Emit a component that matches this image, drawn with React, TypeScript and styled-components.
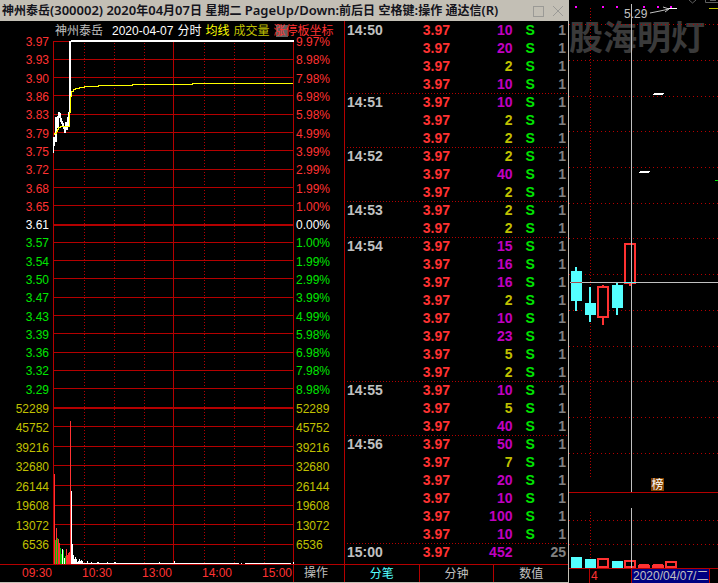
import React from "react";
import styled, { createGlobalStyle } from "styled-components";

const RED = "#b40000";
const BRIGHT = "#ff3232";
const CYAN = "#54ffff";
const GREY = "#c0c0c0";
const OLIVE = "#c0c000";
const FRAME = "#c3bfb5";

const GlobalStyle = createGlobalStyle`
  * { box-sizing: border-box; }
  body {
    margin: 0;
    background: #000;
    color: ${GREY};
    font: 12px/14px "Liberation Sans", "Noto Sans CJK SC", sans-serif;
  }
  button { font: inherit; color: inherit; background: none; border: 0; padding: 0; cursor: pointer; }
`;

const Page = styled.div`
  display: grid;
  grid-template-columns: minmax(0, 569fr) minmax(0, 149fr);
  min-height: 100vh;
`;

const Dialog = styled.section`
  display: flex;
  flex-direction: column;
  border-right: 1px solid ${FRAME};
  border-bottom: 1px solid ${FRAME};
`;

const TitleBar = styled.header`
  display: flex;
  align-items: center;
  height: 21px;
  padding-left: 2px;
  background: ${FRAME};
  color: #14141c;
`;

const Title = styled.h1`
  flex: 1;
  margin: 0;
  white-space: pre;
  font: 600 13px/18px "Noto Sans", "Noto Sans CJK SC", sans-serif;
`;

const Han = styled.span`
  font-size: 12px;
`;

const WindowButton = styled.button`
  width: 20px;
  height: 20px;
  color: #9b9a96;
  svg { display: block; margin: 0 auto; }
`;

const DialogBody = styled.div`
  flex: 1;
  display: grid;
  grid-template-columns: minmax(0, 345fr) minmax(0, 223fr);
  grid-template-rows: 1fr 18px;
`;

const IntradayPanel = styled.div`
  display: grid;
  grid-template-columns: 53px 1fr 50px;
  grid-template-rows: 19px 1fr;
  border-right: 1px solid ${RED};
`;

const Legend = styled.div`
  grid-area: 1 / 2 / 2 / 4;
  display: flex;
  gap: 4px;
  padding-left: 2px;
  line-height: 20px;
  white-space: nowrap;
`;

const LegendItem = styled.span<{ $color: string; $wide?: boolean }>`
  position: relative;
  color: ${(p) => p.$color};
  margin-right: ${(p) => (p.$wide ? "5px" : "0")};
`;

const LegendMark = styled.i`
  position: absolute;
  z-index: -1;
  left: 3px;
  top: 4px;
  width: 12px;
  height: 12px;
  background: #606060;
`;

const Plot = styled.svg`
  display: block;
  width: 100%;
  height: 100%;
  min-height: 0;
`;

const PlotCell = styled.div`
  grid-area: 2 / 2 / 3 / 3;
  min-height: 0;
`;

const Axis = styled.div<{ $side: "left" | "right" }>`
  grid-area: ${(p) => (p.$side === "left" ? "1 / 1 / 3 / 2" : "1 / 3 / 3 / 4")};
  display: flex;
  flex-direction: column;
  padding: 12px 4px 9px 2px;
  text-align: ${(p) => (p.$side === "left" ? "right" : "left")};
`;

const AxisGroup = styled.div<{ $share: number }>`
  flex: ${(p) => p.$share} 1 0;
  display: flex;
  flex-direction: column;
`;

const AxisLabel = styled.span<{ $color: string }>`
  flex: 1 1 0;
  display: flex;
  flex-direction: column;
  justify-content: center;
  color: ${(p) => p.$color};
`;

const TimeBar = styled.div`
  display: grid;
  grid-template-columns: 53px repeat(4, 1fr) 51px;
  border-top: 1px solid ${RED};
  border-right: 1px solid ${RED};
  color: ${BRIGHT};
  line-height: 17px;
  text-align: right;
`;

const TimeLabel = styled.span`
  padding-right: 1px;
`;

const ActionButton = styled.button`
  border-left: 1px solid ${RED};
  color: ${GREY};
  text-align: center;
  padding-right: 6px;
`;

const Ticks = styled.table`
  width: 100%;
  align-self: start;
  table-layout: fixed;
  border-collapse: collapse;
  font-size: 14px;
  font-weight: 700;
  line-height: 18px;
`;

const TickRow = styled.tr<{ $divided: boolean }>`
  height: 18px;
  background: ${(p) =>
    p.$divided
      ? `repeating-linear-gradient(90deg, transparent 0 2px, ${RED} 2px 3px) 0 0 / 100% 1px no-repeat`
      : "none"};
`;

const Cell = styled.td<{ $color: string; $align?: string; $width?: string }>`
  padding: 0 2px;
  width: ${(p) => p.$width ?? "auto"};
  color: ${(p) => p.$color};
  text-align: ${(p) => p.$align ?? "right"};
`;

const TabBar = styled.div`
  display: flex;
  border-top: 1px solid ${RED};
`;

const Tab = styled.button<{ $active?: boolean }>`
  flex: 1;
  color: ${(p) => (p.$active ? CYAN : GREY)};
  & + & { border-left: 1px solid ${RED}; }
`;

const DailyPanel = styled.section`
  display: flex;
  flex-direction: column;
  overflow: hidden;
`;

const Pane = styled.div<{ $share: number }>`
  position: relative;
  flex: ${(p) => p.$share} 1 0;
  min-height: 0;
`;

const PlotLayer = styled.div`
  position: relative;
  height: 100%;
`;

const Watermark = styled.div`
  position: absolute;
  left: 0;
  top: 16px;
  color: #3a3a3a;
  font: 700 34px/40px "Noto Sans CJK SC", sans-serif;
  white-space: nowrap;
`;

const HighLabel = styled.span`
  position: absolute;
  left: 55px;
  top: 7px;
`;

const NewsBadge = styled.span`
  position: absolute;
  left: 82px;
  bottom: 2px;
  width: 13px;
  height: 13px;
  background: #804000;
  color: #fff;
  line-height: 14px;
  text-align: center;
`;

const DateBar = styled.footer`
  display: flex;
  height: 14px;
  padding-left: 20px;
`;

const MonthCell = styled.span`
  width: 42px;
  padding-left: 1px;
  border-left: 1px solid ${RED};
  color: ${BRIGHT};
`;

const DateCell = styled.span`
  padding: 0 1px;
  border: solid ${RED};
  border-width: 0 1px;
  background: #000080;
  white-space: nowrap;
`;

const heading = "神州泰岳(300002) 2020年04月07日 星期二 PageUp/Down:前后日 空格键:操作 通达信(R)";

const prices = ["3.97", "3.93", "3.90", "3.86", "3.83", "3.79", "3.75", "3.72", "3.68", "3.65", "3.61",
  "3.57", "3.54", "3.50", "3.47", "3.43", "3.39", "3.36", "3.32", "3.29"];
const percents = ["9.97%", "8.98%", "7.98%", "6.98%", "5.98%", "4.99%", "3.99%", "2.99%", "1.99%", "1.00%", "0.00%",
  "1.00%", "1.99%", "2.99%", "3.99%", "4.99%", "5.98%", "6.98%", "7.98%", "8.98%"];
const volumes = ["52289", "45752", "39216", "32680", "26144", "19608", "13072", "6536"];

const ticks: [string, number[]][] = [
  ["14:50", [10, 20, 2, 10]],
  ["14:51", [10, 2, 2]],
  ["14:52", [2, 40, 2]],
  ["14:53", [2, 2]],
  ["14:54", [15, 16, 16, 2, 10, 23, 5, 2]],
  ["14:55", [10, 5, 40]],
  ["14:56", [50, 7, 20, 10, 100, 10]],
  ["15:00", [452]],
];

/* Intraday price: [x, top, bottom] for each column of the trace */
const trace = [
  [53, 137, 153], [54, 137, 146], [55, 117, 142], [56, 117, 142], [57, 116, 128], [58, 112, 127],
  [59, 112, 118], [60, 113, 122], [61, 118, 124], [62, 121, 127], [63, 123, 129], [64, 127, 133],
  [65, 122, 133], [66, 122, 130], [67, 117, 130], [68, 112, 126], [69, 41, 113], [70, 41, 113],
];
const bars: [number, number, string][] = [
  [54, 474, BRIGHT], [55, 540, "#00c000"], [56, 528, BRIGHT], [57, 538, "#00c000"], [58, 539, BRIGHT],
  [59, 543, BRIGHT], [60, 548, "#00c000"], [61, 554, "#00c000"], [62, 549, "#fff"], [63, 550, "#00c000"],
  [64, 558, "#fff"], [65, 556, "#00c000"], [66, 549, BRIGHT], [67, 555, BRIGHT], [68, 553, BRIGHT],
  [69, 552, BRIGHT], [70, 421, BRIGHT], [71, 491, "#fff"], [72, 544, "#fff"], [73, 555, "#fff"],
  [74, 559, "#fff"], [75, 557, "#fff"], [76, 559, "#fff"], [77, 562, "#fff"], [78, 561, "#fff"],
  [79, 559, "#fff"], [80, 561, "#fff"], [81, 560, "#fff"], [82, 561, "#fff"], [87, 561, "#fff"],
  [91, 562, "#fff"], [97, 562, "#fff"], [98, 562, "#fff"], [107, 562, "#fff"], [114, 562, "#fff"],
  [115, 562, "#fff"], [159, 562, "#fff"], [174, 561, "#fff"], [293, 562, "#fff"],
];

const toneOf = (i: number) => (i < 10 ? BRIGHT : i === 10 ? "#fff" : "#00e600");

function AxisColumn({ side, labels }: { side: "left" | "right"; labels: string[] }) {
  return (
    <Axis $side={side}>
      <AxisGroup $share={366}>
        {labels.map((t, i) => <AxisLabel key={i} $color={toneOf(i)}>{t}</AxisLabel>)}
      </AxisGroup>
      <AxisGroup $share={156}>
        {volumes.map((t) => <AxisLabel key={t} $color={OLIVE}>{t}</AxisLabel>)}
      </AxisGroup>
    </Axis>
  );
}

function IntradayPlot() {
  const rows = [
    ...Array.from({ length: 20 }, (_, k) => Math.floor(41 + 18.3 * k)),
    ...Array.from({ length: 8 }, (_, k) => Math.floor(407 + 19.6 * k)),
  ];
  return (
    <Plot viewBox="53 40 241 524" preserveAspectRatio="none" shapeRendering="crispEdges" aria-label="分时走势">
      {rows.map((y) => (
        <rect key={y} x="53" y={y} width="241" height={y === 224 || y === 407 ? 2 : 1} fill={RED} />
      ))}
      {[84, 114, 144, 204, 234, 264].map((x) => (
        <line key={x} x1={x + 0.5} x2={x + 0.5} y1="43" y2="564" stroke={RED} strokeDasharray="1 2" />
      ))}
      {[53, 173, 293].map((x) => <rect key={x} x={x} y="41" width="1" height="523" fill={RED} />)}
      {bars.map(([x, y, c]) => <rect key={x} x={x} y={y} width="1" height={564 - y} fill={c} />)}
      <path d="M71 563.5H239M241 563.5H242M245 563.5H291" stroke="#fff" />
      {trace.map(([x, a, b]) => <rect key={x} x={x} y={a} width="1" height={b - a} fill="#fff" />)}
      <rect x="71" y="40" width="223" height="2" fill="#fff" />
      <path
        d="M54.5 135V133.5H56V131.5H57.5V129.5H58.5V127.5H60V126.5H69.5V112.5H70.5V96.5H71.5V91.5H73V89.5H75V88.5H79V87.5H84V86.5H98V85.5H132V84.5H192V83.5H293"
        fill="none"
        stroke="#ffff00"
      />
    </Plot>
  );
}

function TickTable() {
  return (
    <Ticks>
      <tbody>
        {ticks.flatMap(([time, sizes], g) =>
          sizes.map((n, i) => (
            <TickRow key={`${time}-${i}`} $divided={g > 0 && i === 0}>
              <Cell $color={GREY} $align="left" $width="27%">{i === 0 ? time : ""}</Cell>
              <Cell $color={BRIGHT} $width="21%">3.97</Cell>
              <Cell $color={n < 10 ? OLIVE : "#c000c0"} $width="28%">{n}</Cell>
              <Cell $color="#00e600" $align="center" $width="14%">{n === 452 ? "" : "S"}</Cell>
              <Cell $color="#808080">{n === 452 ? 25 : 1}</Cell>
            </TickRow>
          )),
        )}
      </tbody>
    </Ticks>
  );
}

const dotted = (y: number) => (
  <line key={y} x1="569" x2="718" y1={y + 0.5} y2={y + 0.5} stroke={RED} strokeDasharray="1 3" />
);

function CandlePlot() {
  return (
    <Plot viewBox="569 0 149 493" preserveAspectRatio="none" shapeRendering="crispEdges" aria-label="日线">
      {[24, 60, 96, 131, 167, 203, 238, 274, 310, 346, 381, 417, 453].map(dotted)}
      <line x1="590.5" x2="590.5" y1="8" y2="478" stroke={RED} strokeDasharray="1 2" />
      {[575, 602, 616, 643, 657, 670].map((x) => <rect key={x} x={x} y="6" width="2" height="2" fill="#ff00ff" />)}
      <rect x="667" y="8" width="10" height="1" fill="#fff" />
      <rect x="709" y="8" width="9" height="1" fill={OLIVE} />
      <path d="M650 13L660 11L669 9M663 7L669 9L665 12" fill="none" stroke={GREY} shapeRendering="auto" />
      <path d="M689 0L692.5 3L696 0M705.5 0V2.5H718M710 0.5H716" fill="none" stroke="#606060" shapeRendering="auto" />
      <path d="M654 93h10v1h-1v1h-10v-1h1zM640 171h10v1h-1v1h-10v-1h1z" fill="#fff" />
      <rect x="715" y="180" width="3" height="1" fill="#00e600" />
      <path
        d="M571 271h11v30h-11zM575 267h2v44h-2zM585 303h11v12h-11zM589 287h2v35h-2zM612 285h11v23h-11zM616 283h2v32h-2z"
        fill={CYAN}
      />
      <path d="M598 287h10v30h-10zM625 244h10v39h-10z" fill="#000" stroke={BRIGHT} strokeWidth="2" />
      <path d="M602 285h2v2h-2zM602 317h2v8h-2zM629 283h2v3h-2z" fill={BRIGHT} />
      <rect x="570" y="282" width="148" height="1" fill={GREY} />
      <rect x="571" y="282" width="11" height="1" fill="#a84c4c" />
      <rect x="624" y="282" width="12" height="1" fill={CYAN} />
      <rect x="631" y="4" width="1" height="488" fill={GREY} />
      <rect x="569" y="492" width="149" height="1" fill={RED} />
    </Plot>
  );
}

function VolumePlot() {
  return (
    <Plot viewBox="569 493 149 76" preserveAspectRatio="none" shapeRendering="crispEdges" aria-label="成交量">
      {[520, 544].map(dotted)}
      <line x1="590.5" x2="590.5" y1="512" y2="558" stroke={RED} strokeDasharray="1 2" />
      <path d="M571 557h11v11h-11zM585 559h11v9h-11zM612 561h11v7h-11z" fill={CYAN} />
      <path d="M598 567V559H608V567ZM625 567V561H635V567ZM666 567V562H676V567Z" fill="#000" stroke={BRIGHT} strokeWidth="2" />
      <path d="M638 565h1v-1h10v1h1v3h-12zM652 565h1v-1h10v1h1v3h-12z" fill={BRIGHT} />
      <rect x="569" y="568" width="149" height="1" fill={RED} />
      <rect x="631" y="508" width="1" height="60" fill={GREY} />
    </Plot>
  );
}

export default function App() {
  return (
    <>
      <GlobalStyle />
      <Page>
        <Dialog>
          <TitleBar>
            <Title>
              {heading.split(/([\u4e00-\u9fff]+)/).map((part, i) => (i % 2 ? <Han key={i}>{part}</Han> : part))}
            </Title>
            <WindowButton aria-label="最大化">
              <svg width="12" height="12" viewBox="0 0 12 12" fill="none" stroke="currentColor">
                <rect x="1.5" y="1.5" width="10" height="10" />
              </svg>
            </WindowButton>
            <WindowButton aria-label="关闭">
              <svg width="12" height="12" viewBox="0 0 12 12" fill="none" stroke="currentColor">
                <path d="M1 1L11 11M11 1L1 11" />
              </svg>
            </WindowButton>
          </TitleBar>
          <DialogBody>
            <IntradayPanel>
              <Legend>
                <LegendItem $color={GREY} $wide>神州泰岳</LegendItem>
                <LegendItem $color="#fff">2020-04-07</LegendItem>
                <LegendItem $color="#fff">分时</LegendItem>
                <LegendItem $color="#ffff00">均线</LegendItem>
                <LegendItem $color={OLIVE}>成交量</LegendItem>
                <LegendItem $color={BRIGHT}><LegendMark />涨停板坐标</LegendItem>
              </Legend>
              <AxisColumn side="left" labels={prices} />
              <PlotCell><IntradayPlot /></PlotCell>
              <AxisColumn side="right" labels={percents} />
            </IntradayPanel>
            <TickTable />
            <TimeBar>
              {["09:30", "10:30", "13:00", "14:00", "15:00"].map((t) => <TimeLabel key={t}>{t}</TimeLabel>)}
              <ActionButton>操作</ActionButton>
            </TimeBar>
            <TabBar>
              <Tab $active>分笔</Tab>
              <Tab>分钟</Tab>
              <Tab>数值</Tab>
            </TabBar>
          </DialogBody>
        </Dialog>
        <DailyPanel>
          <Pane $share={493}>
            <Watermark>股海明灯</Watermark>
            <PlotLayer><CandlePlot /></PlotLayer>
            <HighLabel>5.29</HighLabel>
            <NewsBadge>榜</NewsBadge>
          </Pane>
          <Pane $share={76}><VolumePlot /></Pane>
          <DateBar>
            <MonthCell>4</MonthCell>
            <DateCell>2020/04/07/二</DateCell>
          </DateBar>
        </DailyPanel>
      </Page>
    </>
  );
}
